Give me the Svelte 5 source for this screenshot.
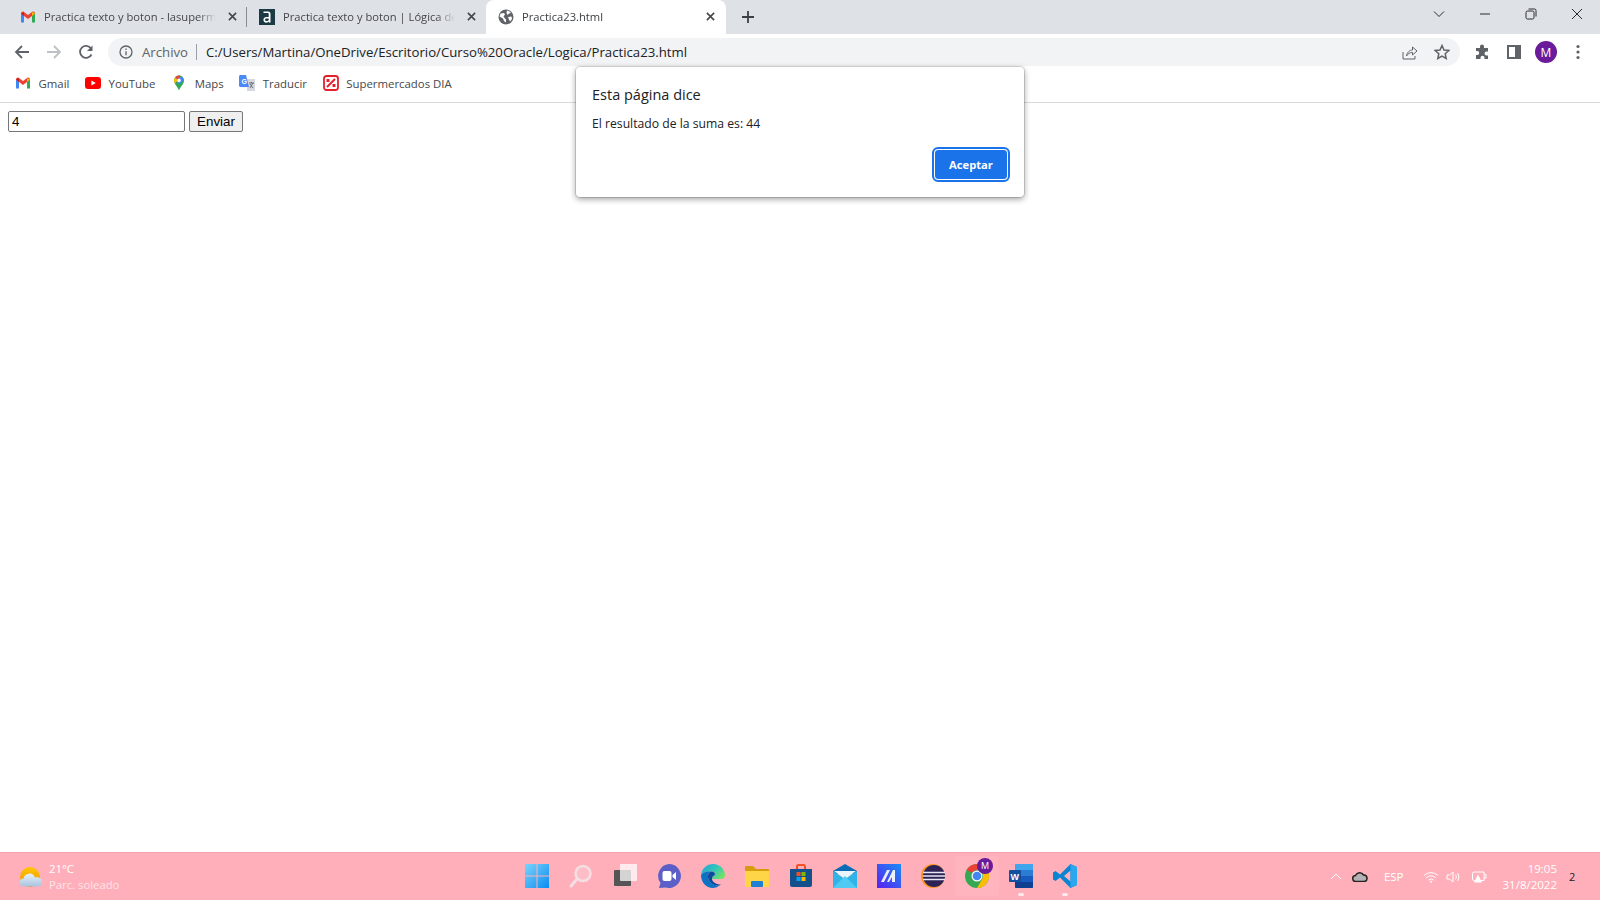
<script>
  const bookmarks = ['Gmail', 'YouTube', 'Maps', 'Traducir', 'Supermercados DIA'];
</script>

{#snippet gmail()}
  <svg class="fav" viewBox="0 0 16 16">
    <path d="M1 13.500V4l3 2v7.500H1.800z" fill="#4285f4" />
    <path d="M12 13.500V6l3-2v9.500h-.8z" fill="#34a853" />
    <path d="M1 4.500C1 2.800 2.800 2 4 3l4 3 4-3c1.200-1 3-.2 3 1.500L12 7 8 10 4 7z" fill="#ea4335" />
    <path d="M12 3l3 1.500L12 7z" fill="#fbbc04" />
    <path d="M4 3 1 4.500 4 7z" fill="#c5221f" />
  </svg>
{/snippet}

<div class="screen">
  <header class="tabstrip">
    <div class="tab">
      {@render gmail()}
      <span class="tab-title">Practica texto y boton - lasuperm</span>
      <svg class="x" viewBox="0 0 10 10"><path d="M1 1l8 8M9 1l-8 8" /></svg>
    </div>
    <i class="tab-sep"></i>
    <div class="tab">
      <svg class="fav" viewBox="0 0 16 16">
        <rect width="16" height="16" fill="#1c3a44" />
        <path d="M4.500 2.500h4.700c1.500 0 2.300 1 2.300 2.300V13.500H9.700v-.9c-.5.7-1.300 1.100-2.300 1.100-1.800 0-3-1.200-3-2.900S5.700 8 7.400 8h2.300V5.200c0-.7-.4-1.100-1.100-1.100H4.500zm5.200 7H7.600c-1 0-1.500.5-1.500 1.300s.6 1.300 1.500 1.300c1.100 0 2.100-.7 2.100-1.700z" fill="#fff" />
      </svg>
      <span class="tab-title">Practica texto y boton | Lógica de</span>
      <svg class="x" viewBox="0 0 10 10"><path d="M1 1l8 8M9 1l-8 8" /></svg>
    </div>
    <div class="tab active">
      <svg class="fav" viewBox="0 0 16 16">
        <circle cx="8" cy="8" r="7.500" fill="#5f6368" />
        <path d="M2.500 4.500 6 4l1 1.500-1.500 2L7 9.500l1 1v3L6 12l-1-2.500-3.500-2zM9 1.500l2 .5 2 2-2 .5-1.500 1.500-1-2zM10 8l3.500-.5.500 2.500-2 2.500-1-2z" fill="#fff" />
      </svg>
      <span class="tab-title">Practica23.html</span>
      <svg class="x" viewBox="0 0 10 10"><path d="M1 1l8 8M9 1l-8 8" /></svg>
    </div>
    <svg class="plus" viewBox="0 0 12 12"><path d="M6 0v12M0 6h12" /></svg>
    <div class="win-controls">
      <svg viewBox="0 0 12 12"><path d="M1 3.500l5 5 5-5" /></svg>
      <svg viewBox="0 0 12 12"><path d="M1 6h10" /></svg>
      <svg viewBox="0 0 12 12"><rect x="1" y="3" width="8" height="8" rx="1.500" /><path d="M3.500 1H9.500A1.500 1.500 0 0 1 11 2.500V8.500" /></svg>
      <svg viewBox="0 0 12 12"><path d="M1 1l10 10M11 1 1 11" /></svg>
    </div>
  </header>

  <nav class="toolbar">
    <svg class="nav-icon" viewBox="0 0 16 16"><path d="M15 8H2M8 2 2 8l6 6" /></svg>
    <svg class="nav-icon off" viewBox="0 0 16 16"><path d="M1 8h13M8 2l6 6-6 6" /></svg>
    <svg class="nav-icon" viewBox="0 0 16 16"><path d="M13.500 10.500A6 6 0 1 1 13 4.500" /><path class="solid" d="M14.500 1.500v5.500H9z" /></svg>
    <div class="omnibox">
      <svg class="info" viewBox="0 0 14 14"><circle cx="7" cy="7" r="6" /><path d="M7 6.200v4M7 3.500v1.500" /></svg>
      <span class="scheme">Archivo</span>
      <i class="omni-sep"></i>
      <span class="url">C:/Users/Martina/OneDrive/Escritorio/Curso%20Oracle/Logica/Practica23.html</span>
      <svg class="omni-icon share" viewBox="0 0 16 16"><path d="M1 8v7h12v-3M4.500 12C5 8 8 6 10.500 6V3L15 7l-4.500 4V8.500C8 8.500 6 9.500 4.500 12z" /></svg>
      <svg class="omni-icon star" viewBox="0 0 16 16"><path d="M8 1.500l2 4.500 4.800.5-3.600 3.200 1 4.800L8 12l-4.200 2.500 1-4.800L1.200 6.500 6 6z" /></svg>
    </div>
    <svg class="ext" viewBox="0 0 16 16"><path d="M6 2.500a2 2 0 0 1 4 0V4h4v3.500h-1.500a2 2 0 0 0 0 4H14V15h-3.500v-1.200a2 2 0 0 0-4 0V15H2v-4h1.200a2 2 0 0 0 0-4H2V4h4z" /></svg>
    <svg class="side" viewBox="0 0 14 14"><path fill-rule="evenodd" d="M0 0h14v14H0zM2 2v10h6V2z" /></svg>
    <div class="avatar">M</div>
    <svg class="menu" viewBox="0 0 4 16"><circle cx="2" cy="2.500" r="1.600" /><circle cx="2" cy="8" r="1.600" /><circle cx="2" cy="13.500" r="1.600" /></svg>
  </nav>

  <div class="bookmarks">
    {#each bookmarks as name, i}
      <div class="bookmark">
        {#if i === 0}
          {@render gmail()}
        {:else if i === 1}
          <svg class="fav" viewBox="0 0 16 16"><rect y="2" width="16" height="12" rx="3" fill="#f00" /><path d="M6.400 5.500 10.800 8l-4.400 2.500z" fill="#fff" /></svg>
        {:else if i === 2}
          <svg class="fav" viewBox="0 0 16 16">
            <path d="M8 0.500C5.200.5 3 2.700 3 5.400c0 3.700 3.500 5.800 5 10 1.500-4.200 5-6.300 5-10C13 2.700 10.800.5 8 .5z" fill="#34a853" />
            <path d="M4 2.500 11.500 2l1.500 3.400L8 9.500z" fill="#4285f4" />
            <path d="M3 5.400C3 4 3.600 3.300 4.200 2.500L7 5 4 8.500C3.500 7.500 3 6.500 3 5.400z" fill="#fbbc04" />
            <path d="M4.200 2.500C5.100 1.300 6.500.5 8 .5l1.500.3L7 5z" fill="#ea4335" />
            <circle cx="8" cy="5.400" r="1.800" fill="#fff" />
          </svg>
        {:else if i === 3}
          <svg class="fav" viewBox="0 0 16 16">
            <path d="M8 4h8v12H8z" fill="#d5d8dc" />
            <path d="M10 8h5M12.500 7v1M11 13l3-5M11 9l3 4" stroke="#6b7078" fill="none" />
            <path d="M1.500 0H7l3 12H1.500C.7 12 0 11.300 0 10.500V1.500C0 .7.700 0 1.500 0z" fill="#4c8bf5" />
            <text x="2.500" y="8.500" font-size="7" font-weight="700" fill="#fff" font-family="Liberation Sans, sans-serif">G</text>
          </svg>
        {:else}
          <svg class="fav" viewBox="0 0 16 16">
            <rect x="1" y="1" width="14" height="14" rx="2.500" fill="#fff" stroke="#e3202c" stroke-width="1.800" />
            <path d="M4 12 12 4" stroke="#e3202c" stroke-width="2" />
            <rect x="3.500" y="4" width="3" height="3" fill="#e3202c" />
            <rect x="9.500" y="9" width="3" height="3" fill="#e3202c" />
          </svg>
        {/if}
        <span>{name}</span>
      </div>
    {/each}
  </div>

  <main class="page">
    <input class="field" type="text" value="4" />
    <button class="send" type="button">Enviar</button>
  </main>

  <div class="dialog">
    <h2>Esta página dice</h2>
    <p>El resultado de la suma es: 44</p>
    <div class="dialog-actions">
      <button class="accept" type="button">Aceptar</button>
    </div>
  </div>

  <footer class="taskbar">
    <div class="weather">
      <svg class="weather-icon" viewBox="0 0 24 20">
        <defs>
          <linearGradient id="sun" x1="0" y1="0" x2="0" y2="1"><stop offset="0" stop-color="#ffc800" /><stop offset="1" stop-color="#f08c00" /></linearGradient>
          <linearGradient id="cloud" x1="0" y1="0" x2="0" y2="1"><stop offset="0" stop-color="#e6f0fa" /><stop offset="1" stop-color="#a9c4de" /></linearGradient>
        </defs>
        <circle cx="11" cy="10" r="10" fill="url(#sun)" />
        <path d="M5 19.500a4 4 0 0 1-.5-8A6 6 0 0 1 16 10.500a4.500 4.500 0 0 1 4 9z" fill="url(#cloud)" />
      </svg>
      <div class="weather-text">
        <span class="temp">21°C</span>
        <span class="cond">Parc. soleado</span>
      </div>
    </div>

    <div class="apps">
      <div class="app">
        <svg viewBox="0 0 24 24">
          <defs><linearGradient id="win" x1="0" y1="0" x2="1" y2="1"><stop offset="0" stop-color="#7ad4fb" /><stop offset="1" stop-color="#0a8cf0" /></linearGradient></defs>
          <path d="M0 0h11.500v11.500H0zM12.500 0H24v11.500H12.500zM0 12.500h11.500V24H0zM12.500 12.500H24V24H12.500z" fill="url(#win)" />
        </svg>
      </div>
      <div class="app">
        <svg viewBox="0 0 24 24"><circle cx="14" cy="9.500" r="7.500" fill="#ffffff30" stroke="#f4dfe3" stroke-width="2.500" /><path d="M8 15 2 22" stroke="#f4dfe3" stroke-width="3" stroke-linecap="round" /></svg>
      </div>
      <div class="app">
        <svg viewBox="0 0 24 24"><rect x="1" y="6" width="17" height="16" rx="1" fill="#555" /><rect x="7" y="0" width="17" height="17" rx="1" fill="#fff" opacity=".75" /></svg>
      </div>
      <div class="app">
        <svg viewBox="0 0 24 24"><path d="M12 0a12 12 0 1 1-3.500 23.500L2 24l1.500-5A12 12 0 0 1 12 0z" fill="#5b5fc7" /><rect x="5.500" y="7" width="9" height="10" rx="2" fill="#fff" /><path d="M15.500 11 19 8v8l-3.500-3z" fill="#fff" /></svg>
      </div>
      <div class="app">
        <svg viewBox="0 0 24 24">
          <defs>
            <linearGradient id="edgeA" x1="0" y1="0" x2="1" y2=".6"><stop offset="0" stop-color="#1f9fdc" /><stop offset=".6" stop-color="#34c8b8" /><stop offset="1" stop-color="#6fe06a" /></linearGradient>
          </defs>
          <path d="M0 11C1 4 6 0 12 0c7 0 12 5 12 11.500 0 2-1.500 3.500-4 3.500H11c0-2 .500-3 3-4 0-2-1-3.500-4-3.500C5 7.500 1 9 0 11z" fill="url(#edgeA)" />
          <path d="M0 11C1 9 5 7 10 7.500 7 9 6.500 12 7.500 15 9 20 15 23 20 20.500 17 23 14 24 12 24 5 24 0 18 0 11z" fill="#0b72c4" />
          <path d="M10 7.500C7 9 6.500 12 7.500 15 9 20 15 23 20 20.500 16 21 11 18 11 15c0-2 .5-3 3-4 0-2-1-3.500-4-3.500z" fill="#0c4a9c" />
        </svg>
      </div>
      <div class="app">
        <svg viewBox="0 0 24 24"><path d="M0 3a1 1 0 0 1 1-1h7l3 3h12a1 1 0 0 1 1 1v2H0z" fill="#d89b0c" /><path d="M0 7h24v15a1 1 0 0 1-1 1H1a1 1 0 0 1-1-1z" fill="#ffd548" /><rect x="6" y="17" width="12" height="6" rx="1" fill="#1f7fd0" /></svg>
      </div>
      <div class="app">
        <svg viewBox="0 0 24 24"><path d="M8 5V2.500A1.500 1.500 0 0 1 9.500 1h5A1.500 1.500 0 0 1 16 2.500V5" fill="none" stroke="#f25022" stroke-width="2" /><path d="M1 5h22v16a2 2 0 0 1-2 2H3a2 2 0 0 1-2-2z" fill="#14508c" /><path d="M7.500 8h4v4h-4z" fill="#f25022" /><path d="M12.500 8h4v4h-4z" fill="#7fba00" /><path d="M7.500 13h4v4h-4z" fill="#00a4ef" /><path d="M12.500 13h4v4h-4z" fill="#ffb900" /></svg>
      </div>
      <div class="app">
        <svg viewBox="0 0 24 24"><path d="M0 7 12 0l12 7v3H0z" fill="#0a6cb4" /><path d="M0 7l12 8 12-8v17H0z" fill="#2fb4ea" /><path d="M1 7h22l-11 8z" fill="#e8f6fc" /><path d="M0 24 12 12l12 12z" fill="#4fcbf3" /></svg>
      </div>
      <div class="app">
        <svg viewBox="0 0 24 24"><defs><linearGradient id="mn" x1="0" y1="1" x2="1" y2="0"><stop offset="0" stop-color="#5a20f0" /><stop offset="1" stop-color="#1a8cf5" /></linearGradient></defs><rect width="24" height="24" fill="url(#mn)" /><path d="M4 18 10 6h3L7 18zM10 18l6-12h2v12h-3v-5l-3 5z" fill="#fff" opacity=".9" /></svg>
      </div>
      <div class="app">
        <svg viewBox="0 0 24 24"><circle cx="12" cy="12" r="12" fill="#f7941e" /><circle cx="13" cy="12" r="11" fill="#2c2255" /><path d="M2 8.500h22M2 12h22M2 15.500h22" stroke="#e8e6f2" stroke-width="1.500" /></svg>
      </div>
      <div class="app chrome-app">
        <svg viewBox="0 0 24 24">
          <circle cx="12" cy="12" r="12" fill="#34a853" />
          <path d="M12 0a12 12 0 0 1 10.400 6H12a6 6 0 0 0-5.200 3L1.600 6A12 12 0 0 1 12 0z" fill="#ea4335" />
          <path d="M22.400 6A12 12 0 0 1 12 24l5.200-9a6 6 0 0 0 0-6z" fill="#fbbc04" />
          <circle cx="12" cy="12" r="5.500" fill="#fff" />
          <circle cx="12" cy="12" r="4.300" fill="#4285f4" />
        </svg>
        <span class="chrome-badge">M</span>
      </div>
      <div class="app running">
        <svg viewBox="0 0 24 24"><rect x="6" y="0" width="18" height="24" rx="1" fill="#2b7cd3" /><path d="M6 0h18v6H6z" fill="#41a5ee" /><path d="M6 12h18v6H6z" fill="#185abd" /><path d="M6 18h18v5a1 1 0 0 1-1 1H7a1 1 0 0 1-1-1z" fill="#103f91" /><rect x="0" y="6" width="12" height="12" rx="1" fill="#11509f" /><text x="1.500" y="15.500" font-size="9" font-weight="700" fill="#fff" font-family="Liberation Sans, sans-serif">W</text></svg>
      </div>
      <div class="app running">
        <svg viewBox="0 0 24 24"><path d="M17.500 0 24 3v18l-6.500 3L7 13.500 2.500 17 0 15.500V8.500L2.500 7 7 10.500zM17.500 6.500 11 12l6.500 5.500z" fill="#0a85d1" /><path d="M17.500 0 24 3v18l-6.500 3z" fill="#2aa7ee" /></svg>
      </div>
    </div>

    <div class="tray">
      <svg class="tray-chev" viewBox="0 0 12 7"><path d="M1 6l5-5 5 5" /></svg>
      <svg class="tray-cloud" viewBox="0 0 16 11"><path d="M4 10.500a3 3 0 0 1-.5-6A4.500 4.500 0 0 1 11.500 4 3.300 3.300 0 0 1 12.500 10.500z" /></svg>
      <span class="lang">ESP</span>
      <svg class="tray-wifi" viewBox="0 0 16 12"><path d="M1 4.500a10 10 0 0 1 14 0M3.200 6.800a7 7 0 0 1 9.600 0M5.500 9a3.800 3.800 0 0 1 5 0" /><circle cx="8" cy="10.700" r="1" /></svg>
      <svg class="tray-sound" viewBox="0 0 16 12"><path d="M1 4h2.500L7 1v10L3.500 8H1zM9.500 3.500c1 1.500 1 3.500 0 5M11.500 2c1.800 2.500 1.800 5.500 0 8" /></svg>
      <svg class="tray-batt" viewBox="0 0 17 13"><path d="M3 2h10v8.500H3a1.500 1.500 0 0 1-1.500-1.500V3.500A1.500 1.500 0 0 1 3 2zM13 4.500h2v3.500h-2" /><path class="solid" d="M7 4.500 11 12.500H3z" /></svg>
      <div class="clock">
        <span>19:05</span>
        <span>31/8/2022</span>
      </div>
      <span class="notif">2</span>
    </div>
  </footer>
</div>

<style>
  :global(body) {
    margin: 0;
    background: #fff;
  }

  .screen {
    position: relative;
    width: 1600px;
    height: 900px;
    display: flex;
    flex-direction: column;
    overflow: hidden;
    font-family: "Open Sans", "Noto Sans", sans-serif;
  }

  .tabstrip {
    height: 34px;
    flex: none;
    background: #dee1e6;
    display: flex;
    align-items: center;
    padding-left: 8px;
    box-sizing: border-box;
  }

  .tab {
    width: 239px;
    height: 34px;
    flex: none;
    display: flex;
    align-items: center;
    padding: 0 10px 1px 12px;
    box-sizing: border-box;
    gap: 8px;
    font-size: 11.200px;
    color: #45474a;
  }

  .tab.active {
    width: 240px;
    background: #fff;
    border-radius: 8px 8px 0 0;
    color: #3c4043;
    padding-right: 11px;
  }

  .tab-sep {
    width: 1px;
    height: 20px;
    background: #8a8d91;
    flex: none;
    margin-left: -1px;
  }

  .tab-title {
    flex: 1;
    white-space: nowrap;
    overflow: hidden;
    min-width: 0;
    -webkit-mask-image: linear-gradient(to left, transparent 0, #000 18px);
    mask-image: linear-gradient(to left, transparent 0, #000 18px);
  }

  .fav {
    width: 16px;
    height: 16px;
    flex: none;
  }

  .x {
    width: 9px;
    height: 9px;
    flex: none;
    margin-left: 4px;
    fill: none;
    stroke: #45474a;
    stroke-width: 1.800;
  }

  .plus {
    width: 12px;
    height: 12px;
    margin-left: 16px;
    fill: none;
    stroke: #3c4043;
    stroke-width: 1.800;
  }

  .win-controls {
    margin-left: auto;
    margin-bottom: 6px;
    display: flex;
    align-items: center;
    gap: 34px;
    padding-right: 17px;
    height: 28px;
  }

  .win-controls svg {
    width: 12px;
    height: 12px;
    fill: none;
    stroke: #2a2c30;
    stroke-width: 1;
  }

  .toolbar {
    height: 36px;
    flex: none;
    display: flex;
    align-items: center;
    background: #fff;
    padding-left: 14px;
    box-sizing: border-box;
  }

  .nav-icon {
    width: 16px;
    height: 16px;
    margin-right: 16px;
    flex: none;
    fill: none;
    stroke: #5f6368;
    stroke-width: 1.800;
  }

  .nav-icon.off {
    stroke: #bdc1c6;
  }

  .nav-icon .solid {
    fill: #5f6368;
    stroke: none;
  }

  .omnibox {
    width: 1352px;
    height: 28px;
    margin-left: -2px;
    border-radius: 14px;
    background: #f1f3f4;
    display: flex;
    align-items: center;
    padding-left: 11px;
    padding-right: 10px;
    box-sizing: border-box;
    font-size: 13.200px;
    flex: none;
  }

  .info {
    width: 14px;
    height: 14px;
    flex: none;
    fill: none;
    stroke: #5f6368;
    stroke-width: 1.300;
    margin-right: 9px;
  }

  .scheme {
    color: #5f6368;
  }

  .omni-sep {
    width: 1px;
    height: 16px;
    background: #9aa0a6;
    margin: 0 9px 0 8px;
  }

  .url {
    color: #202124;
    flex: 1;
    white-space: nowrap;
  }

  .omni-icon {
    width: 16px;
    height: 16px;
    flex: none;
    fill: none;
    stroke: #5f6368;
  }

  .omni-icon.share {
    margin-right: 16px;
    stroke-width: 1;
  }

  .omni-icon.star {
    stroke-width: 1.500;
  }

  .ext,
  .side,
  .avatar,
  .menu {
    flex: none;
  }

  .ext {
    width: 16px;
    height: 16px;
    margin-left: 14px;
    fill: #5f6368;
  }

  .side {
    width: 14px;
    height: 14px;
    margin-left: 17px;
    fill: #5f6368;
  }

  .avatar {
    width: 22px;
    height: 22px;
    margin-left: 14px;
    border-radius: 50%;
    background: #6a1b9a;
    color: #fff;
    font-size: 12px;
    display: flex;
    align-items: center;
    justify-content: center;
  }

  .menu {
    width: 4px;
    height: 16px;
    margin-left: 19px;
    fill: #5f6368;
  }

  .bookmarks {
    height: 33px;
    flex: none;
    display: flex;
    align-items: center;
    gap: 15.700px;
    padding-left: 15px;
    padding-bottom: 6px;
    box-sizing: border-box;
    background: #fff;
    border-bottom: 1px solid #d9dadc;
    font-size: 11.400px;
    color: #45474a;
  }

  .bookmark {
    display: flex;
    align-items: center;
    gap: 7.500px;
  }

  .page {
    flex: 1;
    background: #fff;
    padding: 8px;
    display: flex;
    align-items: flex-start;
    gap: 4px;
    font-family: "Liberation Sans", Arial, sans-serif;
  }

  .field {
    width: 177px;
    height: 21px;
    box-sizing: border-box;
    margin: 0;
    padding: 1px 3px;
    border: 1px solid #767676;
    border-radius: 2px;
    font: 13.330px "Liberation Sans", Arial, sans-serif;
    color: #000;
    outline: none;
  }

  .send {
    width: 54px;
    height: 21px;
    box-sizing: border-box;
    margin: 0;
    padding: 0;
    border: 1px solid #767676;
    border-radius: 2px;
    background: #efefef;
    font: 13.330px "Liberation Sans", Arial, sans-serif;
    color: #000;
  }

  .dialog {
    position: absolute;
    left: 576px;
    top: 67px;
    width: 448px;
    height: 130px;
    box-sizing: border-box;
    background: #fff;
    border-radius: 4px;
    box-shadow: 0 0 0 1px rgba(0, 0, 0, 0.12), 0 2px 6px rgba(0, 0, 0, 0.4);
    padding: 18px 16px 15px;
    color: #202124;
  }

  .dialog h2 {
    margin: 0;
    font-size: 14.500px;
    font-weight: 400;
    line-height: 20px;
  }

  .dialog p {
    margin: 10px 0 0;
    font-size: 12.200px;
    line-height: 18px;
  }

  .dialog-actions {
    display: flex;
    justify-content: flex-end;
    margin-top: 16px;
  }

  .accept {
    width: 74px;
    height: 31px;
    box-sizing: border-box;
    margin: 0;
    padding: 0;
    background: #1a73e8;
    color: #fff;
    border: 1px solid #fff;
    outline: 2px solid #1a73e8;
    outline-offset: 0;
    border-radius: 4px;
    font: 700 11.200px "Open Sans", sans-serif;
  }

  .taskbar {
    height: 48px;
    flex: none;
    background: #ffafba;
    border-top: 1px solid #f3a2ae;
    box-sizing: border-box;
    display: grid;
    grid-template-columns: 1fr auto 1fr;
    align-items: center;
  }

  .weather {
    display: flex;
    align-items: center;
    gap: 6px;
    padding-left: 19px;
  }

  .weather-icon {
    width: 24px;
    height: 20px;
  }

  .weather-text {
    display: flex;
    flex-direction: column;
    font-size: 11.300px;
    line-height: 16px;
    color: #fff;
  }

  .cond {
    color: #ffe3e7;
  }

  .apps {
    display: flex;
    margin-left: 2px;
    margin-bottom: 2px;
  }

  .app {
    position: relative;
    width: 44px;
    height: 40px;
    display: flex;
    align-items: center;
    justify-content: center;
  }

  .app svg {
    width: 24px;
    height: 24px;
  }

  .chrome-app {
    background: rgba(255, 255, 255, 0.07);
    border-radius: 4px;
  }

  .chrome-badge {
    position: absolute;
    top: 2px;
    left: 22px;
    width: 16px;
    height: 16px;
    border-radius: 50%;
    background: #6a1b9a;
    color: #fff;
    font-size: 9px;
    display: flex;
    align-items: center;
    justify-content: center;
  }

  .running::after {
    content: "";
    position: absolute;
    bottom: 0;
    left: 19px;
    width: 6px;
    height: 3px;
    border-radius: 2px;
    background: #ffe9ec;
  }

  .tray {
    display: flex;
    align-items: center;
    justify-content: flex-end;
    color: #fff;
    font-size: 11.500px;
  }

  .tray svg {
    flex: none;
    fill: none;
    stroke: #fff;
  }

  .tray-chev {
    width: 12px;
    height: 7px;
  }

  .tray svg.tray-cloud {
    width: 16px;
    height: 11px;
    margin-left: 10px;
    fill: #b5b0b2;
    stroke: #222;
    stroke-width: 1.500;
  }

  .lang {
    margin-left: 16px;
    margin-right: 19px;
  }

  .tray svg.tray-wifi {
    width: 16px;
    height: 12px;
  }

  .tray-wifi circle {
    fill: #fff;
    stroke: none;
  }

  .tray-sound {
    width: 16px;
    height: 12px;
    margin-left: 7px;
  }

  .tray-batt {
    width: 17px;
    height: 13px;
    margin-left: 9px;
  }

  .tray-batt .solid {
    fill: #fff;
    stroke: none;
  }

  .clock {
    display: flex;
    flex-direction: column;
    align-items: flex-end;
    line-height: 16px;
    margin-left: 15px;
  }

  .notif {
    width: 10px;
    margin-left: 12px;
    margin-right: 21px;
    color: #222;
    font-size: 11px;
  }
</style>
